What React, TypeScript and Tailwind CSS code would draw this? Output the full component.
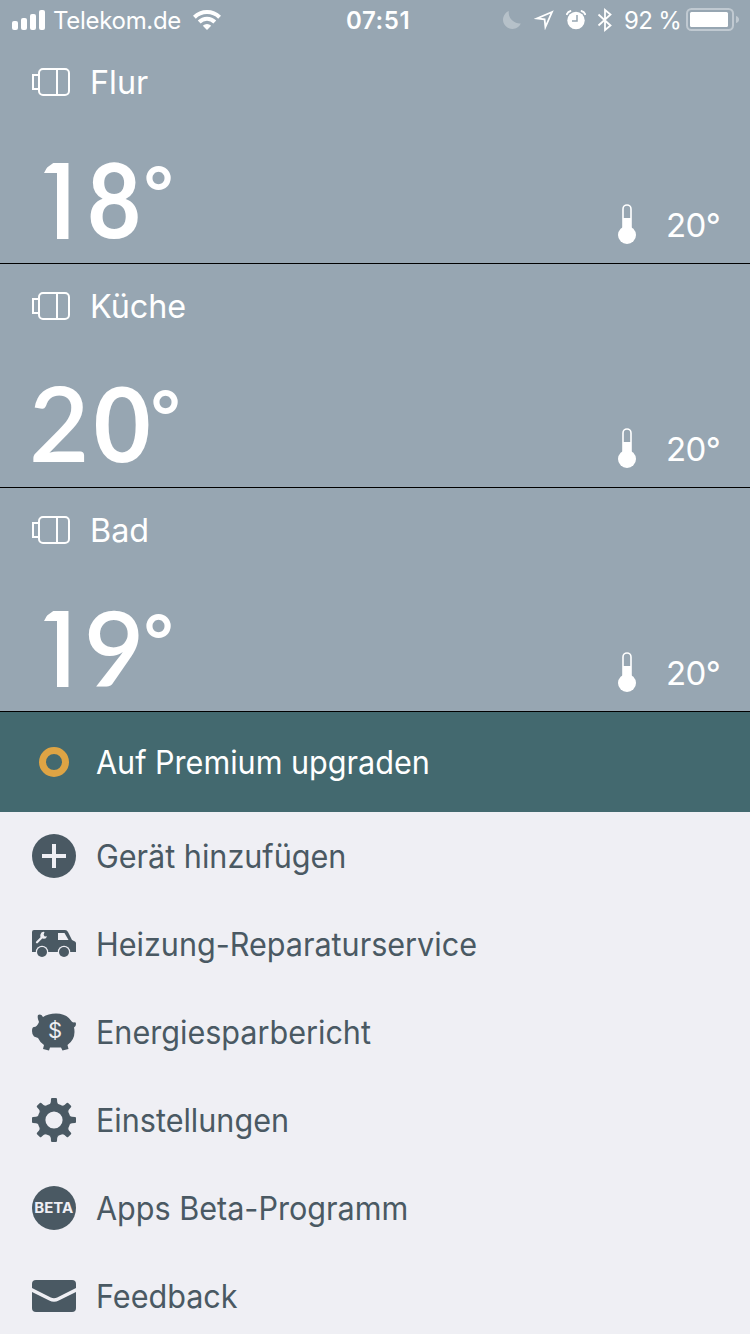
import type { ReactNode } from 'react';

type Room = { name: string; digits: [string, string]; target: string };

const rooms: Room[] = [
  { name: 'Flur', digits: ['1', '8'], target: '20' },
  { name: 'Küche', digits: ['2', '0'], target: '20' },
  { name: 'Bad', digits: ['1', '9'], target: '20' },
];

const digitClass: Record<string, string> = {
  '1': "w-[54px] font-['Inter'] font-semibold [clip-path:polygon(18px_0,100%_0,100%_100%,25px_100%,25px_22px,12px_22px,18px_11px)]",
  '2': "-ml-[3px] mr-[3px] -mt-[3px] w-[60px] origin-left font-['Lato'] font-semibold",
  '8': "-mt-[3px] -ml-[2px] w-[60px] origin-center scale-x-90 font-['Lato'] font-bold",
  '9': "-mt-[3px] -ml-[2px] w-[60px] font-['Lato'] font-semibold",
  '0': "-mt-[3px] w-[59px] origin-center scale-x-95 font-['Lato'] font-bold",
};

function StatusBar() {
  return (
    <header className="flex h-10 items-center pl-3 text-[24px] leading-10">
      <svg width="33" height="20" viewBox="0 0 33 20" fill="currentColor">
        <rect x="0" y="11" width="6" height="9" rx="2" />
        <rect x="9" y="8" width="6" height="12" rx="2" />
        <rect x="18" y="4" width="6" height="16" rx="2" />
        <rect x="27" y="0" width="6" height="20" rx="2" />
      </svg>
      <span className="ml-2 w-[140px] whitespace-nowrap pt-0.5 tracking-[-0.3px]">Telekom.de</span>
      <svg className="shrink-0" width="28" height="20" viewBox="0 0 28 20" fill="none" stroke="currentColor" strokeWidth="4">
        <path d="M1.400 7.200a18 18 0 0 1 25.200 0" />
        <path d="M6.200 12a11 11 0 0 1 15.600 0" />
        <path d="M14 20l-4.200-4.300a6 6 0 0 1 8.400 0z" fill="currentColor" stroke="none" />
      </svg>
      <span className="ml-[125px] w-[156px] shrink-0 whitespace-nowrap pt-0.5 font-semibold tracking-[0.6px]">07:51</span>
      <svg className="shrink-0 opacity-30" width="20" height="20" viewBox="0 0 20 20" fill="currentColor">
        <path d="M6.800 1A11 11 0 0 0 18.800 13.400 9.300 9.300 0 1 1 6.800 1z" />
      </svg>
      <svg className="ml-3 shrink-0" width="20" height="20" viewBox="0 0 20 20" fill="none" stroke="currentColor" strokeWidth="1.800">
        <path d="M18 2L3 8.400l7.600 1 .8 7.600z" />
      </svg>
      <svg className="ml-3 shrink-0" width="20" height="20" viewBox="0 0 20 20" fill="currentColor">
        <circle cx="10" cy="10.500" r="8.700" />
        <path d="M.5 5a6 6 0 0 1 4.700-4.200M19.500 5a6 6 0 0 0-4.700-4.200" fill="none" stroke="currentColor" strokeWidth="1.800" />
        <path d="M11 5v6H6" fill="none" stroke="#97a6b2" strokeWidth="1.500" />
      </svg>
      <svg className="ml-[11px] shrink-0" width="16" height="24" viewBox="0 0 16 24" fill="none" stroke="currentColor" strokeWidth="1.800">
        <path d="M1.500 6.500l12 11L8 22V2l5.500 4.500-12 11" />
      </svg>
      <span className="ml-[11px] w-[62px] shrink-0 whitespace-nowrap pt-0.5 tracking-[-0.7px]">92 %</span>
      <svg className="shrink-0" width="54" height="24" viewBox="0 0 54 24">
        <rect x="1" y="1" width="46" height="21" rx="4.500" fill="none" stroke="currentColor" strokeWidth="2" opacity=".4" />
        <rect x="4" y="4" width="38" height="15" rx="1.500" fill="currentColor" />
        <path d="M50 8q3 1 3 3.500T50 15z" fill="currentColor" opacity=".4" />
      </svg>
    </header>
  );
}

function RoomCard({ room }: { room: Room }) {
  const [first, second] = room.digits;
  return (
    <section className="flex h-56 flex-col border-b border-black">
      <div className="flex h-[84px] items-center pl-8">
        <svg width="38" height="28" viewBox="0 0 38 28" fill="none" stroke="currentColor" strokeWidth="2">
          <rect x="7" y="1" width="30" height="26" rx="4" />
          <path d="M7 7H1v14h6M25 1v26" />
        </svg>
        <span className="ml-5 origin-left scale-x-98">{room.name}</span>
      </div>
      <div className="flex h-[139px] justify-between">
        <div className="flex pl-8 pt-[27px] text-[104px] leading-[100px]">
          <span className={digitClass[first]}>{first}</span>
          <span className={digitClass[second]}>{second}</span>
          <span className="-mt-[10px] font-['Lato'] text-[70px] font-bold">°</span>
        </div>
        <div className="mb-[19px] flex h-10 items-center self-end pr-[30px]">
          <svg width="20" height="40" viewBox="0 0 20 40">
            <rect x="6" y="1" width="8" height="28" rx="4" fill="none" stroke="currentColor" strokeWidth="1.600" />
            <path d="M6 14h8v16H6z" fill="currentColor" />
            <circle cx="10" cy="31" r="9" fill="currentColor" />
          </svg>
          <span className="ml-[29px] pt-0.5 tracking-[-0.7px]">{room.target}°</span>
        </div>
      </div>
    </section>
  );
}

function PlusIcon() {
  return (
    <svg width="44" height="44" viewBox="0 0 44 44">
      <circle cx="22" cy="22" r="22" fill="currentColor" />
      <path d="M22 10v24M10 22h24" stroke="#efeff4" strokeWidth="4" />
    </svg>
  );
}

function VanIcon() {
  return (
    <svg width="44" height="28" viewBox="0 0 44 28" fill="currentColor">
      <path d="M2 0h31q2 0 3 2l4 8 3 1.500q1 .5 1 2V22H0V2q0-2 2-2z" />
      <path d="M26 3h6.500l4 7H26z" fill="#efeff4" />
      <path d="M5 12.300L11 6.300" stroke="#efeff4" strokeWidth="2.200" strokeLinecap="round" />
      <path d="M12.500 2a3.400 3.400 0 1 0 2.500 4.200l-2.200.2-1.200-1.500z" fill="#efeff4" />
      <circle cx="10" cy="22" r="6.200" fill="#efeff4" />
      <circle cx="32" cy="22" r="6.200" fill="#efeff4" />
      <circle cx="10" cy="22" r="5" />
      <circle cx="32" cy="22" r="5" />
    </svg>
  );
}

function PiggyIcon() {
  return (
    <svg width="44" height="38" viewBox="0 0 44 38" fill="currentColor">
      <path d="M6 2q3-1.500 5 2 5-3.500 13-3.500 11 0 16 8.300 1 .8 3 .5 1 0 1 1.700 0 2.500-2 3.500.5 1.500.5 4.500 0 8-7 13l1 4-6 1.500-1.500-3H18l-1 3-6-1.500 1-4q-4-2.500-6-7l-4-1.500Q0 22 0 18t2-4q3 0 5-5Q5 5 6 2z" />
      <text x="23" y="25" textAnchor="middle" fill="#efeff4" fontFamily="Inter, sans-serif" fontSize="22">$</text>
    </svg>
  );
}

function GearIcon() {
  return (
    <svg width="44" height="44" viewBox="-22 -22 44 44">
      <circle r="12.500" fill="none" stroke="currentColor" strokeWidth="7.800" />
      {[0, 45, 90, 135, 180, 225, 270, 315].map((angle) => (
        <path key={angle} transform={`rotate(${angle})`} d="M-5-15.500q1.500-.5 1.800-2.500l.2-3q.1-1 1-1h4q.9 0 1 1l.2 3q.3 2 1.800 2.500z" fill="currentColor" />
      ))}
    </svg>
  );
}

function BetaIcon() {
  return (
    <svg width="44" height="44" viewBox="0 0 44 44">
      <circle cx="22" cy="22" r="22" fill="currentColor" />
      <text x="21.800" y="27.300" textAnchor="middle" textLength="39" lengthAdjust="spacingAndGlyphs" fill="#efeff4" fontFamily="Inter, sans-serif" fontWeight="700" fontSize="14.500">BETA</text>
    </svg>
  );
}

function MailIcon() {
  return (
    <svg width="44" height="32" viewBox="0 0 44 32">
      <rect width="44" height="32" rx="4" fill="currentColor" />
      <path d="M-1 9.500l19 9.500q4 2 8 0l19-9.500" fill="none" stroke="#efeff4" strokeWidth="3.600" />
    </svg>
  );
}

const menu: { label: string; icon: ReactNode }[] = [
  { label: 'Gerät hinzufügen', icon: <PlusIcon /> },
  { label: 'Heizung-Reparaturservice', icon: <VanIcon /> },
  { label: 'Energiesparbericht', icon: <PiggyIcon /> },
  { label: 'Einstellungen', icon: <GearIcon /> },
  { label: 'Apps Beta-Programm', icon: <BetaIcon /> },
  { label: 'Feedback', icon: <MailIcon /> },
];

export default function App() {
  return (
    <main className="h-[1334px] w-[750px] overflow-hidden bg-[#efeff4] font-['Inter',sans-serif] text-[33px] leading-10 text-[#4a5963]">
      <div className="bg-[#97a6b2] text-white">
        <StatusBar />
        {rooms.map((room) => (
          <RoomCard key={room.name} room={room} />
        ))}
      </div>
      <div className="flex h-[100px] items-center bg-[#43696f] pl-[39px] text-white">
        <span className="size-[30px] rounded-full border-[7px] border-[#dea444]" />
        <span className="ml-[27px] origin-left scale-x-[0.955] pt-px text-[32px]">Auf Premium upgraden</span>
      </div>
      <nav className="text-[32px]">
        {menu.map((item) => (
          <div key={item.label} className="flex h-[88px] items-center pl-8">
            {item.icon}
            <span className="ml-5 origin-left scale-x-[0.955] pt-px">{item.label}</span>
          </div>
        ))}
      </nav>
    </main>
  );
}
